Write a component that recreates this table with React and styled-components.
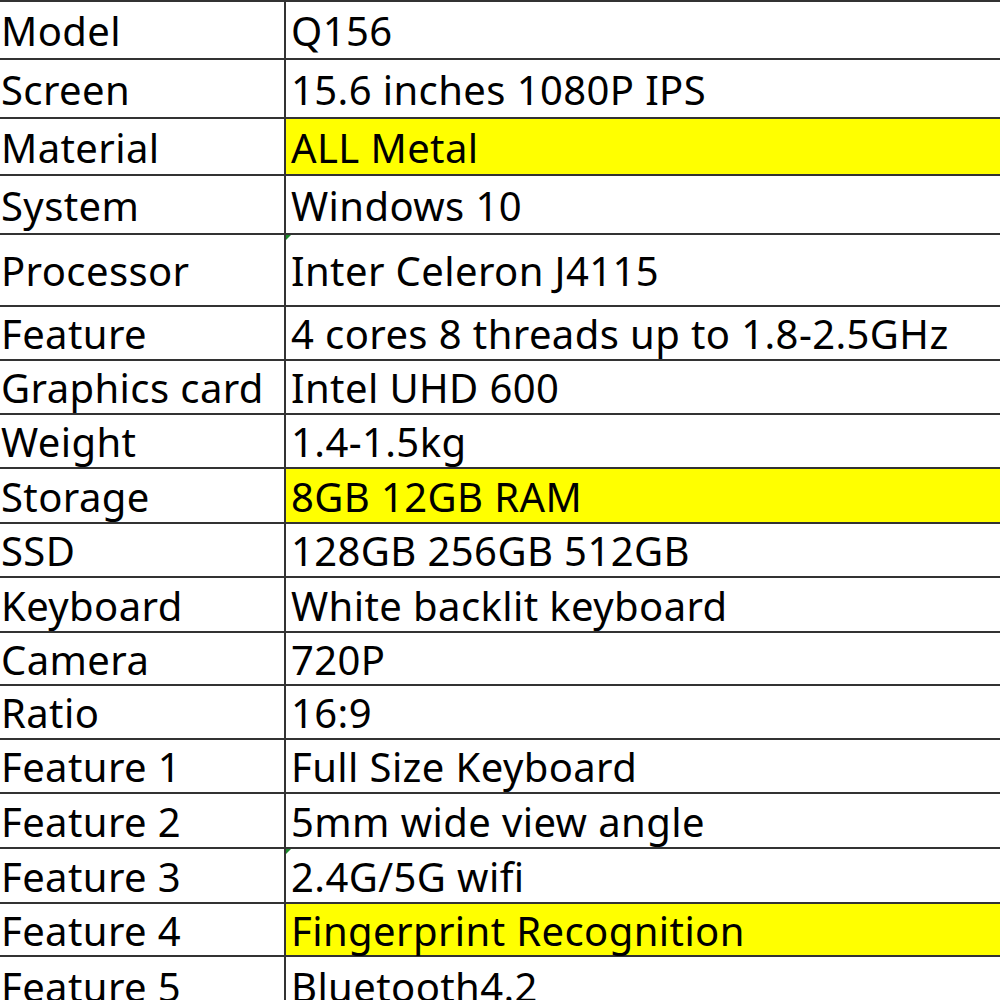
import React from "react";
import styled, { createGlobalStyle } from "styled-components";

const Global = createGlobalStyle`
  html, body { margin: 0; padding: 0; background: #fff; }
  body { width: 1000px; height: 1000px; overflow: hidden; }
`;

const Table = styled.div`
  width: 1000px;
  height: 1000px;
  overflow: hidden;
  font-family: "Noto Sans", "Open Sans", sans-serif;
  font-size: 40px;
  line-height: 1.15;
  letter-spacing: 0.4px;
  color: #000;
  border-top: 2px solid #333;
`;

const Row = styled.div`
  display: grid;
  grid-template-columns: 284px 2px 1fr;
  grid-template-rows: minmax(0, 1fr);
  height: ${(p) => p.$h}px;
  border-bottom: 2px solid #333;
  box-sizing: border-box;
`;

const Divider = styled.div`
  background: #333;
`;

const Label = styled.div`
  display: flex;
  align-items: center;
  min-height: 0;
  overflow: visible;
  padding-left: 1px;
  padding-top: 2px;
  white-space: nowrap;
`;

const Value = styled.div`
  position: relative;
  display: flex;
  align-items: center;
  min-height: 0;
  padding-left: 5px;
  padding-top: 2px;
  white-space: nowrap;
  background: ${(p) => (p.$hl ? "#ffff00" : "#fff")};
`;

const Marker = styled.span`
  position: absolute;
  left: 0;
  top: 0;
  width: 0;
  height: 0;
  border-top: 5px solid #1a8a2a;
  border-right: 5px solid transparent;
`;

const rows = [
  ["Model", "Q156", 58],
  ["Screen", "15.6 inches 1080P IPS", 59],
  ["Material", "ALL Metal", 57, true],
  ["System", "Windows 10", 59],
  ["Processor", "Inter Celeron J4115", 72, false, true],
  ["Feature", "4 cores 8 threads up to 1.8-2.5GHz", 54],
  ["Graphics card", "Intel UHD 600", 54],
  ["Weight", "1.4-1.5kg", 54],
  ["Storage", "8GB 12GB RAM", 55, true],
  ["SSD", "128GB 256GB 512GB", 54],
  ["Keyboard", "White backlit keyboard", 55],
  ["Camera", "720P", 53],
  ["Ratio", "16:9", 54],
  ["Feature 1", "Full Size Keyboard", 54],
  ["Feature 2", "5mm wide view angle", 55],
  ["Feature 3", "2.4G/5G wifi", 55, false, true],
  ["Feature 4", "Fingerprint Recognition", 53, true],
  ["Feature 5", "Bluetooth4.2", 60],
];

export default function App() {
  return (
    <>
      <Global />
      <Table>
        {rows.map(([label, value, h, hl, mark]) => (
          <Row key={label} $h={h}>
            <Label>{label}</Label>
            <Divider />
            <Value $hl={hl}>
              {mark && <Marker />}
              {value}
            </Value>
          </Row>
        ))}
      </Table>
    </>
  );
}
